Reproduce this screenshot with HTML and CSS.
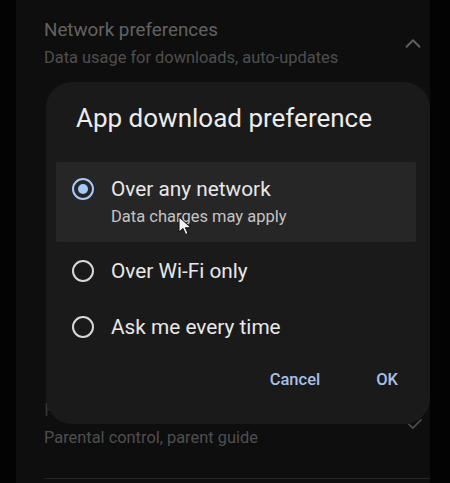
FILE: index.html
```html
<!DOCTYPE html>
<html lang="en">
<head>
    <meta charset="UTF-8">
    <meta name="viewport" content="width=device-width, initial-scale=1.0">
    <title>App download preference</title>
    <link rel="stylesheet" href="styles.css">
</head>
<body>
    <div class="page">
        <!-- Settings list behind the dialog -->
        <div class="setting">
            <div class="setting-text">
                <div class="setting-title">Network preferences</div>
                <div class="setting-sub">Data usage for downloads, auto-updates</div>
            </div>
            <svg class="chevron" width="22" height="22" viewBox="0 0 24 24">
                <path d="M5 15l7-7 7 7" fill="none" stroke="#5e5e5e" stroke-width="2.2" stroke-linecap="round" stroke-linejoin="round"/>
            </svg>
        </div>

        <div class="spacer"></div>

        <div class="setting setting-low">
            <div class="setting-text">
                <div class="setting-title">Family</div>
                <div class="setting-sub">Parental control, parent guide</div>
            </div>
            <svg class="check" width="18" height="18" viewBox="0 0 24 24">
                <path d="M4 12.5l5 5L20 6.5" fill="none" stroke="#4a4a4a" stroke-width="2.4" stroke-linecap="round" stroke-linejoin="round"/>
            </svg>
        </div>
        <div class="divider"></div>

        <!-- Dialog -->
        <div class="dialog">
            <h2 class="dialog-title">App download preference</h2>

            <div class="options">
                <div class="option selected">
                    <span class="radio"><span class="dot"></span></span>
                    <div class="option-text">
                        <div class="option-label">Over any network</div>
                        <div class="option-sub">Data charges may apply</div>
                    </div>
                </div>
                <div class="option">
                    <span class="radio"></span>
                    <div class="option-label">Over Wi-Fi only</div>
                </div>
                <div class="option">
                    <span class="radio"></span>
                    <div class="option-label">Ask me every time</div>
                </div>
            </div>

            <div class="actions">
                <button class="action">Cancel</button>
                <button class="action">OK</button>
            </div>
        </div>

        <!-- Mouse pointer -->
        <svg class="cursor" width="14" height="20" viewBox="0 0 14 20">
            <path d="M1 1v15l4-3.5 2.6 6 2.4-1-2.6-5.8H13z" fill="#f2f2f2" stroke="#111" stroke-width="1"/>
        </svg>
    </div>
</body>
</html>
```

FILE: styles.css
```css
/* Base page */
body {
    margin: 0;
    background: #030303;
    font-family: Roboto, "Noto Sans", sans-serif;
    color: #e6e6e6;
}

.page {
    position: relative;
    margin-left: 16px;
    width: 414px;
    height: 483px;
    background: #0e0e0e;
    overflow: hidden;
}

/* Settings rows behind the scrim */
.setting {
    display: flex;
    align-items: center;
    justify-content: space-between;
    padding: 18px 6px 0 28px;
}

.setting-title {
    font-size: 18.8px;
    color: #626262;
    line-height: 24px;
}

.setting-sub {
    font-size: 16.4px;
    color: #4e4e4e;
    line-height: 22px;
    margin-top: 5px;
}

.spacer {
    height: 329px;
}

.setting-low {
    padding-top: 0;
}

.setting-low .setting-title {
    color: #333333;
}

.divider {
    height: 1px;
    background: #262626;
    margin: 29px 0 0 28px;
    width: 386px;
}

/* Dialog */
.dialog {
    position: absolute;
    left: 30px;
    top: 82px;
    width: 384px;
    height: 342px;
    box-sizing: border-box;
    background: #1a1a1a;
    border-radius: 26px;
    padding: 20px 14px 0 10px;
}

.dialog-title {
    margin: 0 0 0 20px;
    font-size: 26px;
    font-weight: 400;
    color: #ececec;
    line-height: 32px;
}

.options {
    margin-top: 28px;
}

.option {
    display: flex;
    align-items: center;
    height: 56px;
    padding-left: 16px;
}

.option.selected {
    height: 80px;
    box-sizing: border-box;
    align-items: flex-start;
    padding-top: 14px;
    background: #262626;
    border-radius: 2px;
    margin-bottom: 1px;
}

.radio {
    width: 18px;
    height: 18px;
    border: 2.5px solid #d8d8d8;
    border-radius: 50%;
    display: flex;
    align-items: center;
    justify-content: center;
    flex-shrink: 0;
    margin-right: 17px;
}

.selected .radio {
    border-color: #a8c7fa;
    margin-top: 2px;
}

.dot {
    width: 10px;
    height: 10px;
    border-radius: 50%;
    background: #a8c7fa;
}

.option-label {
    font-size: 20.8px;
    line-height: 26px;
    color: #e8e8e8;
}

.option-sub {
    font-size: 16.5px;
    line-height: 22px;
    color: #c4c4c4;
    margin-top: 4px;
}

.actions {
    display: flex;
    justify-content: flex-end;
    gap: 56px;
    margin-top: 15px;
    padding-right: 18px;
}

.action {
    background: none;
    border: none;
    padding: 0;
    font-family: Roboto, sans-serif;
    font-size: 16.5px;
    line-height: 20px;
    font-weight: 500;
    color: #a8c0e6;
}

/* Pointer over content */
.cursor {
    position: absolute;
    left: 162px;
    top: 216px;
}
```
